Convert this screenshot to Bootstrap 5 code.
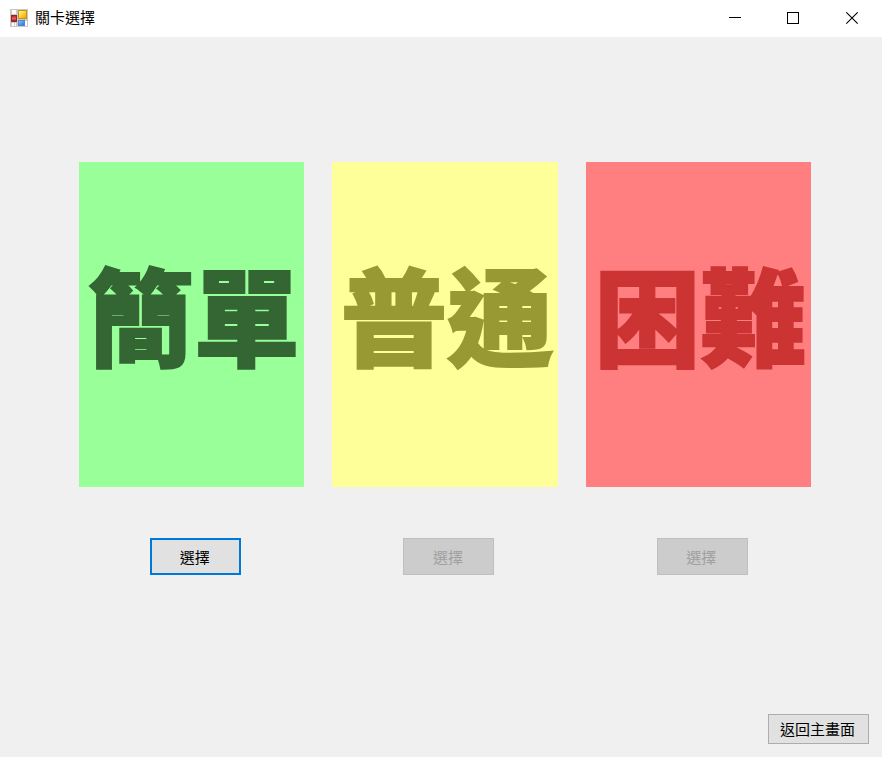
<!DOCTYPE html>
<html lang="zh-Hant">
<head>
<meta charset="utf-8">
<meta name="viewport" content="width=device-width, initial-scale=1">
<title>關卡選擇</title>
<link href="https://cdn.jsdelivr.net/npm/bootstrap@5.3.0/dist/css/bootstrap.min.css" rel="stylesheet">
<style>
body { background: #f0f0f0; color: #000; font-family: "Noto Sans CJK TC", sans-serif; font-size: 15px; line-height: 20px; }
.title-bar { height: 37px; padding-left: 10px; }
.app-icon { margin-bottom: 2px; }
.window-title { font-size: 15px; font-weight: 400; line-height: 20px; margin-left: 7px; padding-bottom: 4px; }
.caption-btn { width: 59px; height: 37px; background: transparent; }
.caption-btn:hover { background: #e5e5e5; }
.level-area { padding: 125px 71px 0 79px; }
.level-list { gap: 28px; }
.level-item { flex: 1 1 0; min-width: 0; }
.level-face { height: 325px; padding-bottom: 26px; }
.level-name { font-size: 106px; line-height: 120px; font-weight: 900; white-space: nowrap; margin-left: 4px; -webkit-text-stroke: 2px currentColor; }
.level-easy { background: #99ff99; color: #336633; }
.level-normal { background: #ffff99; color: #999933; }
.level-hard { background: #ff7f80; color: #cc3333; }
.level-action { padding: 51px 0 0 8px; }
.form-btn { background: #e1e1e1; border: 1px solid #adadad; color: #000; font-size: 15px; line-height: 20px; }
.form-btn:hover { background: #e5f1fb; }
.choose-btn { width: 91px; height: 37px; padding: 0 2px 0 0; }
.default-btn { border: 2px solid #0078d7; }
.choose-btn:disabled { background: #cccccc; border-color: #bfbfbf; color: #a0a0a0; }
.page-foot { padding: 0 13px 13px; }
.back-btn { width: 101px; height: 30px; padding: 0 2px 0 0; }
</style>
<script src="https://cdn.jsdelivr.net/npm/bootstrap@5.3.0/dist/js/bootstrap.bundle.min.js"></script>
</head>
<body class="d-flex flex-column min-vh-100">
<header class="title-bar bg-white d-flex align-items-center">
  <svg class="app-icon" width="18" height="18" viewBox="0 0 18 18" aria-hidden="true">
    <defs>
      <linearGradient id="gold" x2="1" y2="1"><stop stop-color="#fff0a0"/><stop offset=".5" stop-color="#fcd03c"/><stop offset="1" stop-color="#e9a900"/></linearGradient>
      <linearGradient id="ruby" x2="0" y2="1"><stop stop-color="#b62f2b"/><stop offset=".5" stop-color="#e0635c"/><stop offset="1" stop-color="#99201c"/></linearGradient>
      <linearGradient id="azure" x2="1" y2="1"><stop stop-color="#92bdfa"/><stop offset="1" stop-color="#3471d6"/></linearGradient>
    </defs>
    <path fill="#c9c9c9" d="M0 0h18v18H0z"/>
    <path fill="#fff" d="M2 1h4v4H2zM2 14h2v3H2zM5 14h1v3H5zM15 12h2v5h-2z"/>
    <path fill="#9f221e" d="M1 6h6v7H1z"/><path fill="url(#ruby)" d="M2 7h4v5H2z"/>
    <path fill="#c99209" d="M8 1h9v9H8z"/><path fill="url(#gold)" d="M9 2h7v7H9z"/>
    <path fill="#4f83d5" d="M8 11h7v6H8z"/><path fill="url(#azure)" d="M9 12h5v4H9z"/>
  </svg>
  <h1 class="window-title mb-0">關卡選擇</h1>
  <div class="ms-auto d-flex">
    <button type="button" class="caption-btn border-0 p-0 d-flex align-items-center justify-content-center" aria-label="最小化"><svg width="13" height="13" viewBox="0 0 13 13"><path d="M1 5.5h12" stroke="#000"/></svg></button>
    <button type="button" class="caption-btn border-0 p-0 d-flex align-items-center justify-content-center" aria-label="最大化"><svg width="13" height="13" viewBox="0 0 13 13"><path d="M.5.5h11v11H.5z" fill="none" stroke="#000" shape-rendering="crispEdges"/></svg></button>
    <button type="button" class="caption-btn border-0 p-0 d-flex align-items-center justify-content-center" aria-label="關閉"><svg width="13" height="13" viewBox="0 0 13 13"><path d="M.3.3l11.4 11.4M11.7.3L.3 11.7" stroke="#000" stroke-width="1.1"/></svg></button>
  </div>
</header>
<main class="level-area flex-grow-1">
  <div class="level-list d-flex">
    <section class="level-item">
      <div class="level-face level-easy d-flex align-items-center justify-content-center"><h2 class="level-name mb-0">簡單</h2></div>
      <div class="level-action text-center"><button type="button" class="btn form-btn choose-btn default-btn rounded-0">選擇</button></div>
    </section>
    <section class="level-item">
      <div class="level-face level-normal d-flex align-items-center justify-content-center"><h2 class="level-name mb-0">普通</h2></div>
      <div class="level-action text-center"><button type="button" class="btn form-btn choose-btn rounded-0 opacity-100" disabled>選擇</button></div>
    </section>
    <section class="level-item">
      <div class="level-face level-hard d-flex align-items-center justify-content-center"><h2 class="level-name mb-0">困難</h2></div>
      <div class="level-action text-center"><button type="button" class="btn form-btn choose-btn rounded-0 opacity-100" disabled>選擇</button></div>
    </section>
  </div>
</main>
<footer class="page-foot d-flex justify-content-end">
  <button type="button" class="btn form-btn back-btn rounded-0">返回主畫面</button>
</footer>
</body>
</html>
